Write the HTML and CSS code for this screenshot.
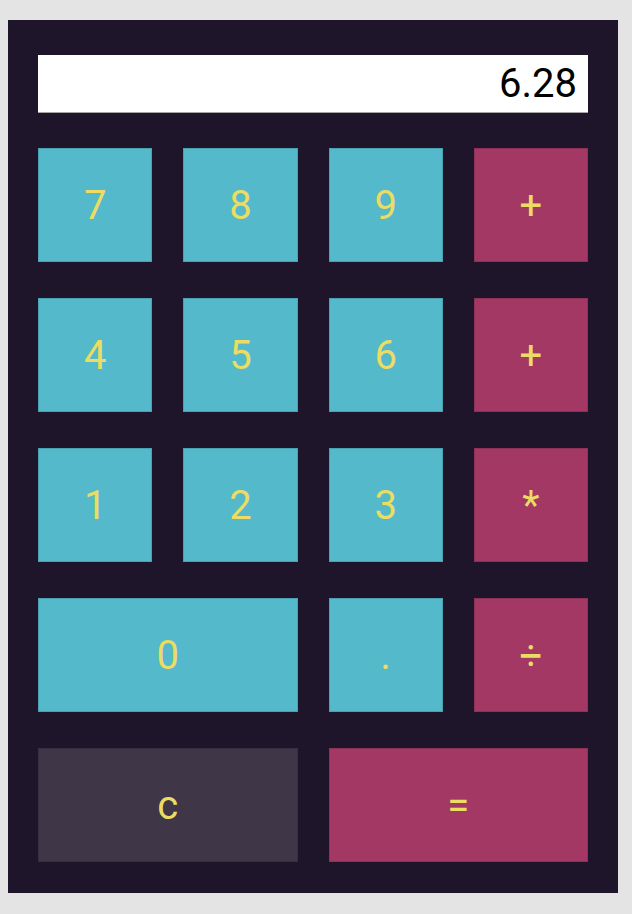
FILE: index.html
```html
<!DOCTYPE html>
<html>
<head>
<meta charset="utf-8">
<link rel="stylesheet" href="styles.css">
</head>
<body>
<div class="calc">
  <div class="display">6.28</div>
  <div class="keys">
    <button class="key num">7</button>
    <button class="key num">8</button>
    <button class="key num">9</button>
    <button class="key op">+</button>
    <button class="key num">4</button>
    <button class="key num">5</button>
    <button class="key num">6</button>
    <button class="key op">+</button>
    <button class="key num">1</button>
    <button class="key num">2</button>
    <button class="key num">3</button>
    <button class="key op">*</button>
    <button class="key num wide">0</button>
    <button class="key num">.</button>
    <button class="key op">÷</button>
    <button class="key clear wide">c</button>
    <button class="key op wide">=</button>
  </div>
</div>
</body>
</html>
```
FILE: styles.css
```css
html, body {
  margin: 0;
  padding: 0;
}
body {
  background: #e4e4e4;
  font-family: Roboto, "Liberation Sans", sans-serif;
  padding-top: 20px;
  padding-left: 8px;
}
.calc {
  width: 610px;
  height: 873px;
  box-sizing: border-box;
  background: #1e152a;
  padding: 35px 30px 31px;
}
.display {
  height: 58px;
  background: #ffffff;
  color: #000;
  font-size: 40px;
  line-height: 58px;
  text-align: right;
  padding-right: 11px;
  box-sizing: border-box;
  box-shadow: inset 0 -1px 0 rgba(0,0,0,0.35);
}
.keys {
  margin-top: 35px;
  display: grid;
  grid-template-columns: repeat(4, 1fr);
  grid-auto-rows: 114px;
  column-gap: 31px;
  row-gap: 36px;
}
.key {
  margin: 0;
  padding: 0;
  border: none;
  font-family: Roboto, "Liberation Sans", sans-serif;
  font-size: 40px;
  color: #ebdc63;
  display: flex;
  align-items: center;
  justify-content: center;
  box-shadow: inset 0 0 0 1px rgba(0,0,0,0.12);
}
.wide {
  grid-column: span 2;
}
.num {
  background: #53b9cb;
}
.op {
  background: #a33864;
}
.clear {
  background: #3f3648;
}
```
